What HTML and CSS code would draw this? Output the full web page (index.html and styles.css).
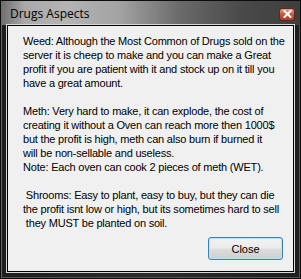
FILE: index.html
```html
<!DOCTYPE html>
<html>
<head>
<meta charset="utf-8">
<link rel="stylesheet" href="styles.css">
</head>
<body>
<div class="window">
  <div class="titlebar">
    <span class="title">Drugs Aspects</span>
    <span class="xbtn"><svg width="9" height="8" viewBox="0 0 9 8"><path d="M1.5 1 L7.5 7 M7.5 1 L1.5 7" stroke="#fff" stroke-width="2" stroke-linecap="square"/></svg></span>
  </div>
  <div class="client">
    <div class="text">Weed: Although the Most Common of Drugs sold on the
server it is cheep to make and you can make a Great
profit if you are patient with it and stock up on it till you
have a great amount.

Meth: Very hard to make, it can explode, the cost of
creating it without a Oven can reach more then 1000$
but the profit is high, meth can also burn if burned it
will be non-sellable and useless.
Note: Each oven can cook 2 pieces of meth (WET).

 Shrooms: Easy to plant, easy to buy, but they can die
the profit isnt low or high, but its sometimes hard to sell
 they MUST be planted on soil.</div>
    <div class="actions"><button class="btn">Close</button></div>
  </div>
</div>
</body>
</html>
```
FILE: styles.css
```css
html, body {
  margin: 0;
  padding: 0;
  background: #1a1a1a;
}
.window {
  width: 301px;
  height: 279px;
  box-sizing: border-box;
  border: 1px solid #0c0c0c;
  background: linear-gradient(to right, #1e1e1e 0, #2c2c2c 50%, #1e1e1e 100%);
  box-shadow: inset 1px 1px 0 #6a6a6a, inset -1px -1px 0 #555;
  display: flex;
  flex-direction: column;
}
.titlebar {
  height: 24px;
  display: flex;
  align-items: center;
  justify-content: space-between;
  padding: 0 4px 0 9px;
  background: linear-gradient(to right, #6e6e6e 0, #a9a9a9 8%, #b4b4b4 22%, #a2a2a2 40%, #6a6a6a 60%, #4a4a4a 80%, #3e3e3e 100%);
}
.title {
  font-family: "Open Sans", "Noto Sans", sans-serif;
  font-size: 12px;
  color: #000;
  margin-top: 1px;
}
.xbtn {
  width: 16px;
  height: 13px;
  box-sizing: border-box;
  border: 1px solid #5a2a20;
  border-radius: 3px;
  background: linear-gradient(#e6a08a 0, #c8553c 50%, #b63a22 100%);
  display: flex;
  align-items: center;
  justify-content: center;
  margin-top: 2px;
  margin-right: 1px;
}
.xbtn svg { display: block; }
.client {
  flex: 1;
  margin: 0 6px 6px 6px;
  border: 1px solid #000;
  box-shadow: 0 0 0 1px #d8d8d8;
  background: #f0f0f0;
  display: flex;
  flex-direction: column;
  padding: 8px 0 0 15px;
}
.text {
  font-family: "Liberation Sans", Arial, sans-serif;
  font-size: 11px;
  letter-spacing: -0.2px;
  line-height: 14px;
  color: #000;
  white-space: pre;
}
.actions {
  display: flex;
  justify-content: flex-end;
  padding: 7px 10px 0 0;
}
.btn {
  width: 75px;
  height: 23px;
  box-sizing: border-box;
  border: 1px solid #3c7fb1;
  border-radius: 3px;
  background: linear-gradient(#f2f2f2 0, #ebebeb 48%, #dddddd 52%, #cfcfcf 100%);
  box-shadow: inset 0 0 0 1px #b6e3f7;
  font-family: "Liberation Sans", Arial, sans-serif;
  font-size: 11px;
  color: #000;
  padding: 0;
}
```
